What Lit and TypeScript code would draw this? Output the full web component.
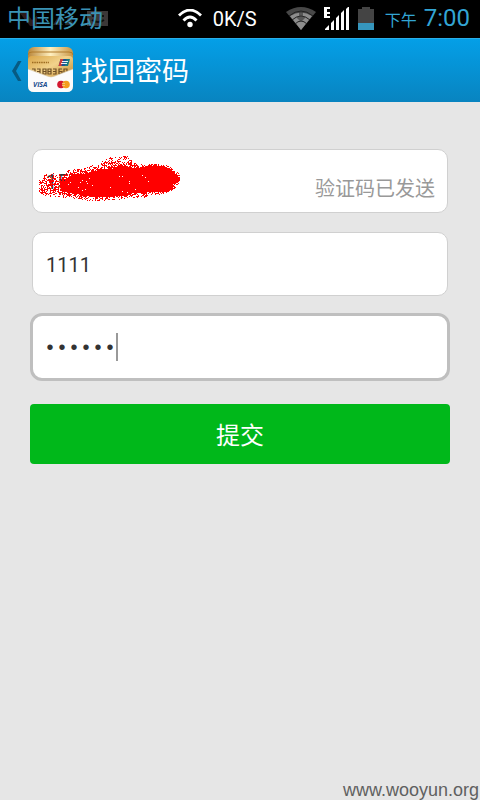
import { LitElement, html, svg, css } from "lit";
import { customElement } from "lit/decorators.js";

// Profile of the spray-paint mark: x, outer top, solid top, solid bottom, outer bottom.
const PROFILE = [
  [0, 23, 31, 31, 37],
  [5, 19, 31, 32, 42],
  [13, 18, 30, 32, 43],
  [20, 17, 28, 35, 42],
  [33, 14, 19, 38, 43],
  [47, 12, 18, 40, 45],
  [60, 7, 15, 41, 46],
  [74, 0, 12, 41, 46],
  [81, 0, 10, 40, 45],
  [87, 0, 11, 39, 43],
  [97, 8, 13, 37, 43],
  [107, 9, 11, 37, 42],
  [114, 8, 10, 36, 40],
  [124, 9, 11, 36, 39],
  [131, 11, 14, 34, 37],
  [137, 15, 20, 27, 32],
  [141, 20, 24, 24, 25],
];

function sprayPath(): string {
  let seed = 77;
  const rand = () => {
    seed = (seed * 1103515245 + 12345) % 2147483648;
    return seed / 2147483648;
  };
  let d = "";
  for (let x = 0; x < 141; x++) {
    const i = PROFILE.findIndex((p, n) => n > 0 && x < p[0]);
    const a = PROFILE[i - 1];
    const b = PROFILE[i];
    const t = (x - a[0]) / (b[0] - a[0]);
    const [outT, inT, inB, outB] = [1, 2, 3, 4].map((k) => a[k] + (b[k] - a[k]) * t);
    for (let y = 0; y < 48; y++) {
      let p = 0;
      if (y >= inT && y <= inB) p = x < 22 ? 0.55 : 0.992;
      else if (y > outT && y < inT) p = 0.2 + (0.5 * (y - outT)) / (inT - outT);
      else if (y > inB && y < outB) p = 0.2 + (0.5 * (outB - y)) / (outB - inB);
      if (rand() < p) d += `M${x} ${y}h1v1h-1z`;
    }
  }
  return d;
}

const SPRAY = sprayPath();

@customElement("status-bar")
class StatusBar extends LitElement {
  static styles = css`
    :host {
      display: flex;
      align-items: center;
      height: 38px;
      padding: 0 10px 0 7px;
      background: #000;
      font-family: Roboto, "Noto Sans CJK SC", sans-serif;
      white-space: nowrap;
    }
    svg { display: block; flex: none; }
    .carrier { display: grid; align-items: center; color: #3a93b5; font-size: 24px; line-height: 36px; }
    .carrier > * { grid-area: 1 / 1; }
    .speed {
      display: flex;
      align-items: center;
      gap: 11px;
      margin: 0 29px 0 auto;
      color: #fff;
      font-size: 20px;
    }
    .right { display: flex; align-items: center; gap: 8px; }
    .clock { display: flex; align-items: baseline; gap: 7px; margin-left: 3px; color: #33a5d4; font-size: 24px; line-height: 38px; }
    .clock small { font-size: 16px; }
  `;
  render() {
    return html`
      <div class="carrier">
        <svg width="104" height="24" viewBox="0 0 104 24">
          <path d="M12 5h7l6 8 5-4v10h-7z" fill="#2b1c1c" />
          <path d="M46 18l5-8 5 8zM58 18l4-10 5 10z" fill="#262626" />
          <path d="M80 4h21v15H80z" fill="#3c3838" />
          <path d="M86 8v2M96 8v2M85 13q6 4 12 0" fill="none" stroke="#111" stroke-width="2" />
        </svg>
        <span>中国移动</span>
      </div>
      <div class="speed">
        <svg width="24" height="20" viewBox="0 0 24 20">
          <g fill="none" stroke="#fff" stroke-width="2.800">
            <path d="M1 6.500Q12-4.500 23 6.500" />
            <path d="M5.500 11.500Q12 4.500 18.500 11.500" />
          </g>
          <circle cx="12" cy="15.500" r="2.700" fill="#fff" />
        </svg>
        <span>0K/S</span>
      </div>
      <div class="right">
        <svg width="30" height="24" viewBox="0 0 30 24">
          <path d="M0 5Q15-5 30 5L15 23z" fill="#484848" />
          <path d="M4 9Q15 2 26 9L15 23z" fill="#8d8d8d" />
          <path d="M3 9Q15-1 27 9M6 13Q15 5 24 13M9 17Q15 11 21 17" fill="none" stroke="#222" />
          <path d="M13 5h4v5h3l-5 5-5-5h3z" fill="#333" opacity=".6" />
        </svg>
        <svg width="26" height="24" viewBox="0 0 26 24">
          <path d="M0 0h6v2H3v3h3v2H3v2h3v2H0z" fill="#fff" />
          <path d="M1 23v-1l4-4v5zM7 23v-7l3-3v10zM12 23V11l3-3v15zM17 23V6l3-3v20zM22 23V2l3-3v24z" fill="#fff" />
        </svg>
        <svg width="16" height="24" viewBox="0 0 16 24">
          <path d="M4 0h8v2h4v21H0V2h4z" fill="#444" />
          <path d="M0 16h16v7H0z" fill="#3696bd" />
        </svg>
        <div class="clock"><small>下午</small><span>7:00</span></div>
      </div>
    `;
  }
}

@customElement("title-bar")
class TitleBar extends LitElement {
  static styles = css`
    :host {
      display: flex;
      align-items: center;
      height: 64px;
      box-sizing: border-box;
      padding: 0 12px 2px;
      border-top: 1px solid #29b0ea;
      background: linear-gradient(#049fe7, #0884c0);
      color: #fff;
      font-family: "Noto Sans CJK SC", sans-serif;
    }
    .back {
      display: flex;
      align-items: center;
      gap: 6px;
      padding: 0;
      border: 0;
      background: none;
    }
    svg { display: block; }
    h1 { margin: 0 0 0 7px; font-size: 27px; line-height: 40px; font-weight: 400; }
  `;
  render() {
    return html`
      <button class="back" aria-label="返回">
        <svg width="10" height="24" viewBox="0 0 10 24">
          <path d="M6 3h3.500L4 13l5.500 10H6L0 13z" fill="#075b83" />
        </svg>
        <svg width="46" height="46" viewBox="0 0 46 46">
          <defs>
            <linearGradient id="gold" x2="1" y2="1">
              <stop offset="0" stop-color="#d9a548" />
              <stop offset=".45" stop-color="#f2d38c" />
              <stop offset="1" stop-color="#b97b1c" />
            </linearGradient>
            <linearGradient id="back" x2="1">
              <stop offset="0" stop-color="#b9863a" />
              <stop offset=".5" stop-color="#fff0c0" />
              <stop offset="1" stop-color="#c89545" />
            </linearGradient>
          </defs>
          <rect width="45" height="45" rx="6" fill="url(#back)" />
          <path d="M0 8q0-3 4-3h37q4 0 4 3" fill="none" stroke="#b07b2b" />
          <path d="M0 13q0-4 4-4h37q4 0 4 4v22H0z" fill="url(#gold)" />
          <path d="M4 15.500h17" stroke="#9d6b20" stroke-width="1.300" stroke-dasharray="1.500 .8" />
          <path d="M32.500 12h9.500l-2 7h-9.500z" fill="#187a81" />
          <path d="M32.500 12h3l-2 7h-3z" fill="#d23a3a" />
          <path d="M35.500 12h3l-2 7h-3z" fill="#1f4f92" />
          <path d="M34 14.500h6M33 16.500h6" stroke="#fff" stroke-width=".9" />
          <g fill="none" stroke="#6e4f24" stroke-width="1.200">
            <path d="M4 22h3v5M9 22h3v5h-3M9 24.500h3M15 22h3v5h-3zM15 24.500h3M20 22h3v5h-3zM20 24.500h3M25 22h3v5h-3M25 24.500h3M31 27v-5h3M31 24.500h3v2.500h-3M36 22h3v5h-3z" />
          </g>
          <path d="M0 22l19 7q4 2 8 0l18-7v17q0 6-6 6H6q-6 0-6-6z" fill="#fbfbfb" />
          <path d="M0 22l19 7q4 2 8 0l18-7" fill="none" stroke="#d6c8a8" stroke-width=".6" />
          <text x="5" y="40" font-family="Open Sans, sans-serif" font-size="7" font-weight="700" font-style="italic" fill="#1c4f8f">VISA</text>
          <circle cx="33" cy="37.500" r="3.800" fill="#d31830" />
          <circle cx="38" cy="37.500" r="3.800" fill="#f39c1c" />
          <path d="M34 36.500h3M34 38.500h3" stroke="#f8d0a0" stroke-width=".7" />
        </svg>
      </button>
      <h1>找回密码</h1>
    `;
  }
}

@customElement("app-root")
class AppRoot extends LitElement {
  static styles = css`
    :host {
      display: flex;
      flex-direction: column;
      min-height: 100vh;
      background: #e6e6e6;
      font-family: Roboto, "Noto Sans CJK SC", sans-serif;
    }
    form {
      display: flex;
      flex-direction: column;
      gap: 15px;
      padding: 45px 30px;
    }
    .field {
      position: relative;
      display: flex;
      align-items: center;
      box-sizing: border-box;
      height: 64px;
      margin: 2px;
      padding: 0 12px 0 13px;
      border: 1px solid #d0d0d0;
      border-radius: 10px;
      background: #fff;
    }
    .focused {
      height: 68px;
      margin: 0;
      padding: 0 11px;
      border: 3px solid #bfbfbf;
      border-radius: 12px;
    }
    input {
      flex: 1;
      min-width: 0;
      padding: 2px 0 0;
      border: 0;
      outline: 0;
      background: none;
      color: #333;
      font: 20px/28px Roboto, "Noto Sans CJK SC", sans-serif;
    }
    .secret {
      flex: none;
      field-sizing: content;
      padding: 4px 0 0;
      font-family: "Liberation Mono", monospace;
    }
    .caret { width: 2px; height: 28px; background: #999; }
    .spray { position: absolute; left: 6px; top: 5px; }
    .sent {
      margin-top: 16px;
      color: #999;
      font-size: 20px;
      line-height: 28px;
    }
    .submit {
      height: 60px;
      margin-top: 8px;
      padding: 0;
      border: 0;
      border-radius: 4px;
      background: #00b81a;
      color: #fff;
      font: 24px/36px "Noto Sans CJK SC", sans-serif;
    }
    footer {
      margin-top: auto;
      padding-right: 1px;
      color: #606060;
      font: 18px/20px "Liberation Sans", sans-serif;
      text-align: right;
    }
  `;
  render() {
    return html`
      <status-bar></status-bar>
      <title-bar></title-bar>
      <form>
        <div class="field">
          <input type="tel" aria-label="手机号" .value=${"15"} />
          <svg class="spray" width="141" height="48" viewBox="0 0 141 48" shape-rendering="crispEdges">
            ${svg`<path d=${SPRAY} fill="#f00" />`}
          </svg>
          <span class="sent">验证码已发送</span>
        </div>
        <div class="field">
          <input type="text" aria-label="验证码" .value=${"1111"} />
        </div>
        <div class="field focused">
          <input class="secret" type="password" aria-label="新密码" .value=${"111111"} />
          <span class="caret"></span>
        </div>
        <button class="submit" type="button">提交</button>
      </form>
      <footer>www.wooyun.org</footer>
    `;
  }
}
